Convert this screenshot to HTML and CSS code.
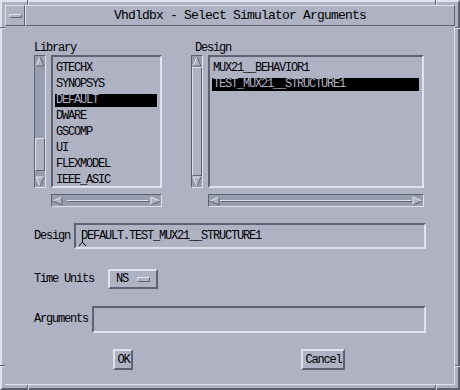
FILE: index.html
```html
<!DOCTYPE html>
<html lang="en">
<head>
    <meta charset="UTF-8">
    <title>Vhdldbx - Select Simulator Arguments</title>
    <link rel="stylesheet" href="styles.css">
</head>
<body>

    <div class="window">
        <!-- resize handle marks on the frame -->
        <span class="tick tv" style="left:25px;top:0"></span>
        <span class="tick tv" style="left:433px;top:0"></span>
        <span class="tick tv" style="left:25px;bottom:0"></span>
        <span class="tick tv" style="left:433px;bottom:0"></span>
        <span class="tick th" style="top:25px;left:0"></span>
        <span class="tick th" style="top:363px;left:0"></span>
        <span class="tick th" style="top:25px;right:0"></span>
        <span class="tick th" style="top:363px;right:0"></span>

        <div class="titlebar">
            <div class="menu-btn"><span class="dash"></span></div>
            <div class="title">Vhdldbx - Select Simulator Arguments</div>
        </div>

        <div class="client">
            <div class="lists">
                <!-- Library -->
                <div class="pane">
                    <div class="label">Library</div>
                    <div class="list-row">
                        <div class="vscroll">
                            <svg class="arrow" width="10" height="11" viewBox="0 0 10 11"><polygon points="5,1 9,10 1,10" fill="#aeb2c3"/><polyline points="1,10 5,1" stroke="#e6e8ee" fill="none"/><polyline points="5,1 9,10 1,10" stroke="#5e6272" fill="none"/></svg>
                            <div class="track">
                                <div class="gap" style="height:71px"></div>
                                <div class="slider" style="height:33px"></div>
                                <div class="gap" style="flex:1"></div>
                            </div>
                            <svg class="arrow" width="10" height="11" viewBox="0 0 10 11"><polygon points="1,1 9,1 5,10" fill="#aeb2c3"/><polyline points="5,10 1,1 9,1" stroke="#e6e8ee" fill="none"/><polyline points="9,1 5,10" stroke="#5e6272" fill="none"/></svg>
                        </div>
                        <div class="list">
                            <div class="item">GTECHX</div>
                            <div class="item">SYNOPSYS</div>
                            <div class="item selected">DEFAULT</div>
                            <div class="item">DWARE</div>
                            <div class="item">GSCOMP</div>
                            <div class="item">UI</div>
                            <div class="item">FLEXMODEL</div>
                            <div class="item">IEEE_ASIC</div>
                        </div>
                    </div>
                    <div class="hscroll">
                        <svg class="arrow" width="11" height="10" viewBox="0 0 11 10"><polygon points="1,5 10,1 10,9" fill="#aeb2c3"/><polyline points="10,1 1,5" stroke="#e6e8ee" fill="none"/><polyline points="1,5 10,9 10,1" stroke="#5e6272" fill="none"/></svg>
                        <div class="track">
                            <div class="gap" style="width:4px"></div>
                            <div class="slider" style="width:82px"></div>
                            <div class="gap" style="flex:1"></div>
                        </div>
                        <svg class="arrow" width="11" height="10" viewBox="0 0 11 10"><polygon points="1,1 10,5 1,9" fill="#aeb2c3"/><polyline points="1,9 1,1 10,5" stroke="#e6e8ee" fill="none"/><polyline points="10,5 1,9" stroke="#5e6272" fill="none"/></svg>
                    </div>
                </div>

                <!-- Design -->
                <div class="pane">
                    <div class="label design-label">Design</div>
                    <div class="list-row">
                        <div class="vscroll">
                            <svg class="arrow" width="10" height="11" viewBox="0 0 10 11"><polygon points="5,1 9,10 1,10" fill="#aeb2c3"/><polyline points="1,10 5,1" stroke="#e6e8ee" fill="none"/><polyline points="5,1 9,10 1,10" stroke="#5e6272" fill="none"/></svg>
                            <div class="track">
                                <div class="slider" style="flex:1"></div>
                            </div>
                            <svg class="arrow" width="10" height="11" viewBox="0 0 10 11"><polygon points="1,1 9,1 5,10" fill="#aeb2c3"/><polyline points="5,10 1,1 9,1" stroke="#e6e8ee" fill="none"/><polyline points="9,1 5,10" stroke="#5e6272" fill="none"/></svg>
                        </div>
                        <div class="list">
                            <div class="item">MUX21__BEHAVIOR1</div>
                            <div class="item selected">TEST_MUX21__STRUCTURE1</div>
                        </div>
                    </div>
                    <div class="hscroll">
                        <svg class="arrow" width="11" height="10" viewBox="0 0 11 10"><polygon points="1,5 10,1 10,9" fill="#aeb2c3"/><polyline points="10,1 1,5" stroke="#e6e8ee" fill="none"/><polyline points="1,5 10,9 10,1" stroke="#5e6272" fill="none"/></svg>
                        <div class="track">
                            <div class="slider" style="flex:1"></div>
                        </div>
                        <svg class="arrow" width="11" height="10" viewBox="0 0 11 10"><polygon points="1,1 10,5 1,9" fill="#aeb2c3"/><polyline points="1,9 1,1 10,5" stroke="#e6e8ee" fill="none"/><polyline points="10,5 1,9" stroke="#5e6272" fill="none"/></svg>
                    </div>
                </div>
            </div>

            <!-- Design field -->
            <div class="row design-row">
                <span class="label">Design</span>
                <div class="field">
                    DEFAULT.TEST_MUX21__STRUCTURE1
                    <svg class="caret" width="9" height="16" viewBox="0 0 9 16"><line x1="4.5" y1="0" x2="4.5" y2="12" stroke="#000"/><polyline points="1,15 4.5,11 8,15" stroke="#000" fill="none"/></svg>
                </div>
            </div>

            <!-- Time Units -->
            <div class="row time-row">
                <span class="label">Time Units</span>
                <div class="option">
                    <span>NS</span>
                    <span class="indicator"></span>
                </div>
            </div>

            <!-- Arguments -->
            <div class="row args-row">
                <span class="label">Arguments</span>
                <div class="field"></div>
            </div>

            <div class="buttons">
                <button class="btn ok">OK</button>
                <button class="btn cancel">Cancel</button>
            </div>
        </div>
    </div>

</body>
</html>
```

FILE: styles.css
```css
body {
    margin: 0;
    background: #aeb2c3;
    font-family: "Liberation Mono", monospace;
    font-size: 12px;
    letter-spacing: -1.2px;
    color: #000;
}
.window {
    position: relative;
    width: 460px;
    height: 390px;
    box-sizing: border-box;
    border: 2px solid;
    border-color: #e1e3ea #5e6272 #5e6272 #e1e3ea;
    padding: 3px;
    display: flex;
    flex-direction: column;
    background: #aeb2c3;
}
.tick {
    position: absolute;
    background: #5e6272;
}
.tick.tv {
    width: 1px;
    height: 5px;
    border-right: 1px solid #e1e3ea;
}
.tick.th {
    width: 5px;
    height: 1px;
    border-bottom: 1px solid #e1e3ea;
}
.tick[style*="bottom"] { margin-bottom: -2px; }
.tick[style*="top:0"] { margin-top: -2px; }
.tick[style*="left:0"] { margin-left: -2px; }
.tick[style*="right:0"] { margin-right: -2px; }

.titlebar {
    display: flex;
    height: 21px;
}
.menu-btn {
    width: 20px;
    box-sizing: border-box;
    border: 1px solid;
    border-color: #e1e3ea #5e6272 #5e6272 #e1e3ea;
    display: flex;
    align-items: center;
    justify-content: center;
}
.dash {
    width: 11px;
    height: 2px;
    border: 1px solid;
    border-color: #e1e3ea #5e6272 #5e6272 #e1e3ea;
}
.title {
    flex: 1;
    box-sizing: border-box;
    border: 1px solid;
    border-color: #e1e3ea #5e6272 #5e6272 #e1e3ea;
    text-align: center;
    font-size: 13px;
    letter-spacing: -0.8px;
    line-height: 19px;
}
.client {
    flex: 1;
    border-right: 1px solid #e1e3ea;
    border-bottom: 1px solid #e1e3ea;
    padding: 16px 28px 0 29px;
}
.label {
    line-height: 13px;
    white-space: nowrap;
}
.lists {
    display: grid;
    grid-template-columns: 128px 233px;
    column-gap: 29px;
}
.design-label {
    margin-left: 4px;
}
.list-row {
    display: flex;
    gap: 5px;
    height: 133px;
}
.vscroll {
    width: 12px;
    box-sizing: border-box;
    border: 1px solid;
    border-color: #5e6272 #e1e3ea #e1e3ea #5e6272;
    background: #999db0;
    display: flex;
    flex-direction: column;
}
.track {
    flex: 1;
    display: flex;
    flex-direction: column;
}
.hscroll .track {
    flex-direction: row;
}
.slider {
    box-sizing: border-box;
    border: 1px solid;
    border-color: #e1e3ea #5e6272 #5e6272 #e1e3ea;
    background: #aeb2c3;
}
.arrow {
    display: block;
    flex: none;
}
.list {
    flex: 1;
    box-sizing: border-box;
    border: 2px solid;
    border-color: #5e6272 #e1e3ea #e1e3ea #5e6272;
    padding: 5px 3px 0 2px;
    display: flex;
    flex-direction: column;
    gap: 3px;
    overflow: hidden;
}
.item {
    line-height: 13px;
    padding-left: 1px;
    white-space: nowrap;
}
.item.selected {
    background: #000;
    color: #aeb2c3;
}
.hscroll {
    margin: 6px 0 0 17px;
    height: 13px;
    box-sizing: border-box;
    border: 1px solid;
    border-color: #5e6272 #e1e3ea #e1e3ea #5e6272;
    background: #999db0;
    display: flex;
    align-items: center;
}
.row {
    display: flex;
    align-items: center;
}
.design-row {
    margin-top: 16px;
    gap: 4px;
}
.field {
    position: relative;
    flex: 1;
    height: 26px;
    box-sizing: border-box;
    border: 2px solid;
    border-color: #5e6272 #e1e3ea #e1e3ea #5e6272;
    padding-left: 5px;
    line-height: 22px;
    white-space: nowrap;
}
.caret {
    position: absolute;
    left: 2px;
    top: 6px;
}
.time-row {
    margin-top: 20px;
    gap: 14px;
}
.option {
    width: 50px;
    height: 20px;
    box-sizing: border-box;
    border: 2px solid;
    border-color: #e1e3ea #5e6272 #5e6272 #e1e3ea;
    display: flex;
    align-items: center;
    padding-left: 6px;
    gap: 9px;
}
.indicator {
    width: 11px;
    height: 3px;
    border: 1px solid;
    border-color: #e1e3ea #5e6272 #5e6272 #e1e3ea;
}
.args-row {
    margin-top: 17px;
    gap: 4px;
}
.args-row .field {
    height: 27px;
}
.buttons {
    display: flex;
    margin-top: 16px;
    padding-left: 79px;
    gap: 168px;
}
.btn {
    font-family: "Liberation Mono", monospace;
    font-size: 12px;
    letter-spacing: -1.2px;
    height: 21px;
    padding: 0 0 0 1px;
    box-sizing: border-box;
    border: 2px solid;
    border-color: #e1e3ea #5e6272 #5e6272 #e1e3ea;
    background: #aeb2c3;
    color: #000;
}
.btn.ok { width: 20px; }
.btn.cancel { width: 44px; }
```
